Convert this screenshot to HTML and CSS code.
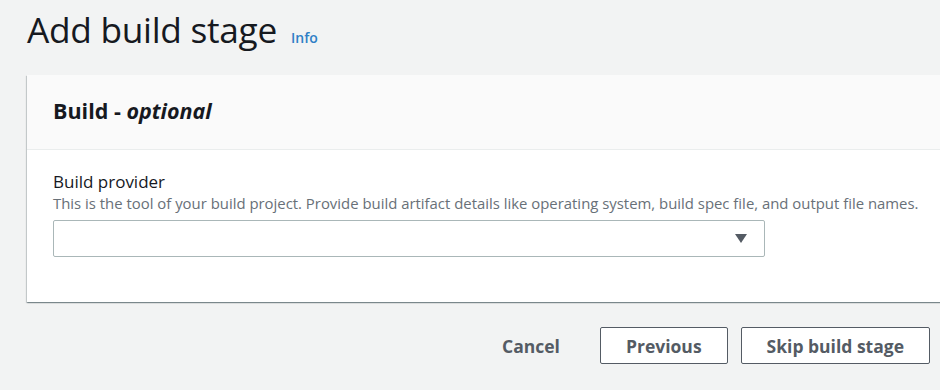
FILE: index.html
```html
<!DOCTYPE html>
<html lang="en">
<head>
    <meta charset="UTF-8">
    <title>Add build stage</title>
    <link rel="stylesheet" href="styles.css">
</head>
<body>
    <div class="page">
        <div class="page-header">
            <h1>Add build stage</h1>
            <a class="info-link" href="#">Info</a>
        </div>

        <!-- Build container -->
        <div class="card">
            <div class="card-header">
                <h2>Build - <i>optional</i></h2>
            </div>
            <div class="card-body">
                <div class="field">
                    <label class="field-label">Build provider</label>
                    <div class="field-desc">This is the tool of your build project. Provide build artifact details like operating system, build spec file, and output file names.</div>
                    <div class="select">
                        <svg class="caret" width="12" height="9" viewBox="0 0 12 9">
                            <polygon points="0,0 12,0 6,9" fill="#545b64"/>
                        </svg>
                    </div>
                </div>
            </div>
        </div>

        <div class="actions">
            <button class="btn-link">Cancel</button>
            <button class="btn">Previous</button>
            <button class="btn">Skip build stage</button>
        </div>
    </div>
</body>
</html>
```

FILE: styles.css
```css
* {
    margin: 0;
    padding: 0;
    box-sizing: border-box;
}

body {
    font-family: "Open Sans", "Noto Sans", sans-serif;
    background-color: #f2f3f3;
    color: #16191f;
    overflow: hidden;
}

.page {
    padding: 5px 0 0 27px;
    width: 960px;
}

.page-header {
    display: flex;
    align-items: baseline;
    gap: 14px;
    height: 70px;
}

h1 {
    font-size: 35.3px;
    font-weight: 400;
    letter-spacing: -0.3px;
    line-height: 48px;
}

.info-link {
    color: #2f7fc6;
    font-size: 14px;
    font-weight: 600;
    text-decoration: none;
}

.card {
    background-color: #fff;
    width: 940px;
    box-shadow: 0 1px 1px 0 rgba(0,28,36,0.3), 1px 1px 1px 0 rgba(0,28,36,0.15), -1px 1px 1px 0 rgba(0,28,36,0.15);
}

.card-header {
    background-color: #fafafa;
    border-bottom: 1px solid #eaeded;
    height: 75px;
    padding: 21px 26px 0;
}

.card-header h2 {
    font-size: 21.5px;
    font-weight: 700;
    line-height: 30px;
}

.card-body {
    padding: 20px 26px 45px;
}

.field-label {
    display: block;
    font-size: 17px;
    line-height: 23px;
}

.field-desc {
    font-size: 14.9px;
    line-height: 20px;
    color: #687078;
    margin-bottom: 7px;
}

.select {
    width: 712px;
    height: 37px;
    border: 1px solid #aab7b8;
    border-radius: 2px;
    display: flex;
    align-items: center;
    justify-content: flex-end;
    padding-right: 17px;
}

.actions {
    display: flex;
    justify-content: flex-end;
    align-items: center;
    gap: 13px;
    width: 903px;
    margin-top: 25px;
}

button {
    font-family: inherit;
    font-size: 17.5px;
    font-weight: 700;
    color: #545b64;
    background: #fff;
    border: 1px solid #545b64;
    border-radius: 2px;
    height: 37px;
    padding: 0 25px;
}

.btn-link {
    background: none;
    border: none;
    padding: 0 27px 0 0;
}
```
